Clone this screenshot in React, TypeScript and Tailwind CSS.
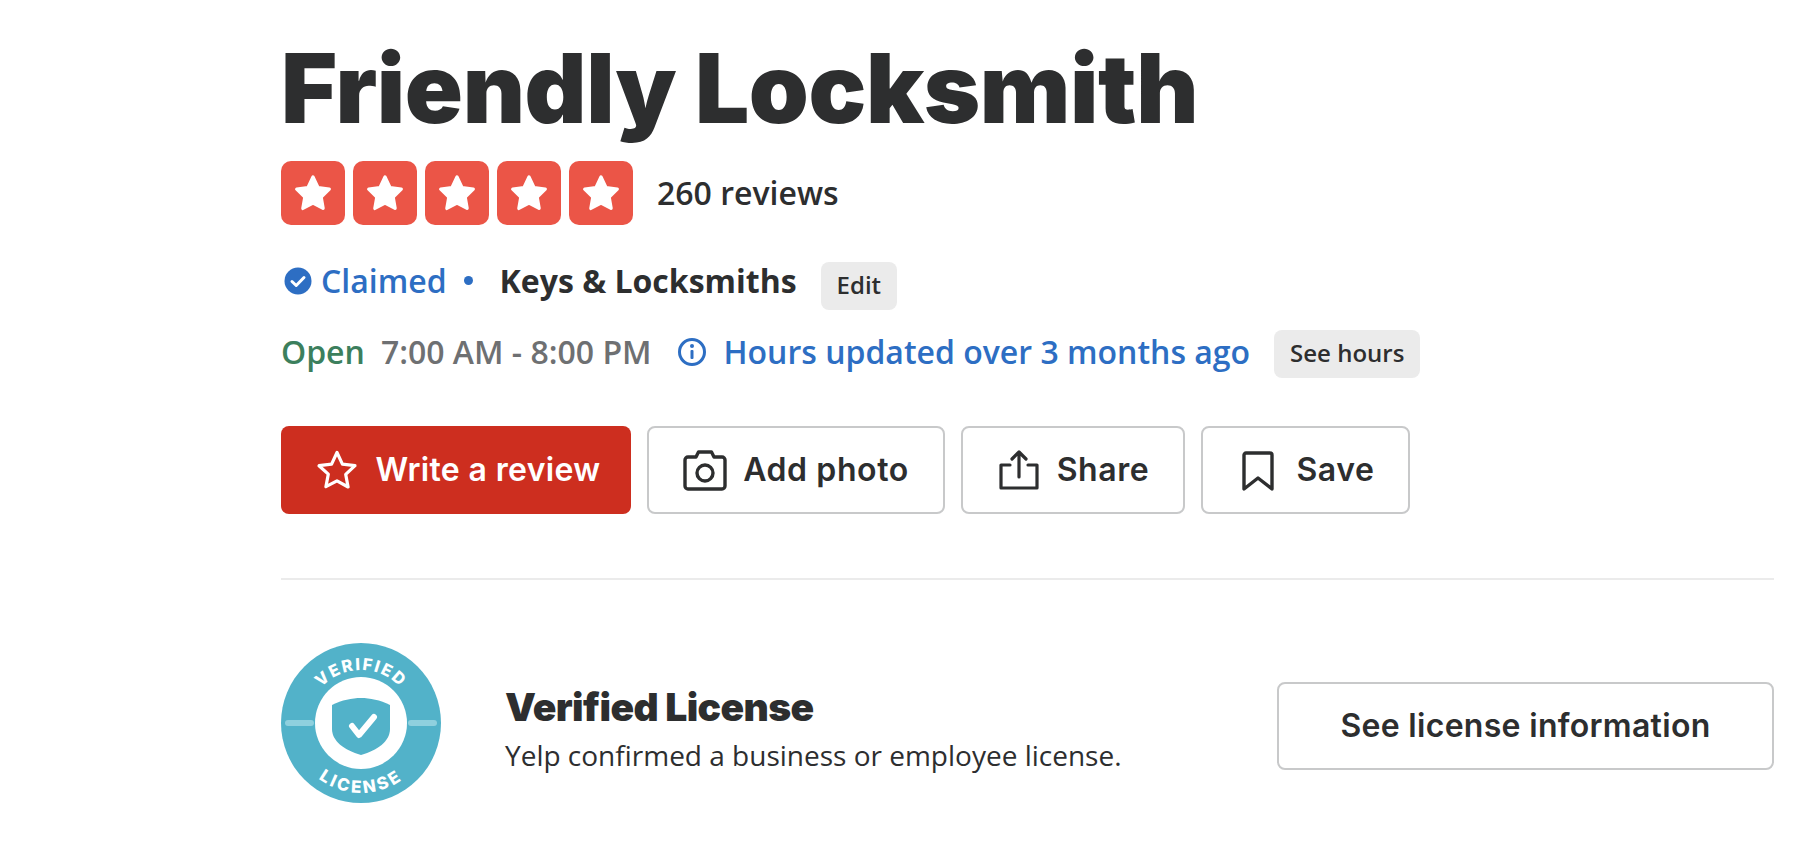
const ink = 'text-[#2d2e2f]';

function StarBox() {
  return (
    <div className="w-16 h-16 rounded-[10px] bg-[#eb5547] flex items-center justify-center">
      <svg className="w-11 h-11" viewBox="0 0 40 40" aria-hidden="true">
        <path
          d="M20 5.5l4.6 9.6 10.2 1.4-7.4 7.2 1.8 10.3L20 29.1 10.8 34l1.8-10.3-7.4-7.2 10.2-1.4z"
          fill="#fff"
          stroke="#fff"
          strokeWidth={3}
          strokeLinejoin="round"
        />
      </svg>
    </div>
  );
}

function SmallButton({ label }: { label: string }) {
  return (
    <div className={`h-12 px-4 rounded-lg bg-[#ebebeb] flex items-center text-[24px] font-semibold ${ink} font-['Open_Sans',sans-serif]`}>
      <span className="pb-[2px]">{label}</span>
    </div>
  );
}

function ActionButton({ label, width, icon }: { label: string; width: string; icon: React.ReactNode }) {
  return (
    <div className={`${width} h-[88px] rounded-lg border-2 border-[#c8c9ca] flex items-center justify-center gap-4 text-[32px] font-semibold tracking-[0.6px] ${ink}`}>
      {icon}
      {label}
    </div>
  );
}

function LicenseBadge() {
  return (
    <svg className="w-40 h-40 shrink-0" viewBox="0 0 160 160" aria-hidden="true">
      <circle cx="80" cy="80" r="80" fill="#52b2c9" />
      <circle cx="80" cy="80" r="46" fill="#fff" />
      <rect x="4" y="77" width="29" height="6" rx="3" fill="#8fd0de" />
      <rect x="127" y="77" width="29" height="6" rx="3" fill="#8fd0de" />
      <path d="M80 55c9 0 19 2 29 7v24c0 12-12 21-29 26-17-5-29-14-29-26V62c10-5 20-7 29-7z" fill="#52b2c9" />
      <path d="M71 83l7 9 15-18" fill="none" stroke="#fff" strokeWidth={6} strokeLinecap="round" strokeLinejoin="round" />
      <defs>
        <path id="badge-top" d="M27 80a53 53 0 0 1 106 0" />
        <path id="badge-bottom" d="M10 80a70 70 0 0 0 140 0" />
      </defs>
      <text fill="#fff" fontFamily="Inter, sans-serif" fontWeight={800} fontSize="16.5" letterSpacing="1.8" textAnchor="middle">
        <textPath href="#badge-top" startOffset="50%">VERIFIED</textPath>
      </text>
      <text fill="#fff" fontFamily="Inter, sans-serif" fontWeight={800} fontSize="17" letterSpacing="2.8" textAnchor="middle">
        <textPath href="#badge-bottom" startOffset="50%">LICENSE</textPath>
      </text>
    </svg>
  );
}

export default function App() {
  return (
    <div className="w-[1815px] h-[865px] overflow-hidden bg-white pl-[281px] pr-[41px] font-['Inter',sans-serif]">
      <h1 className={`h-[161px] pt-[33px] text-[96px] leading-[110px] font-black tracking-[-0.4px] ${ink}`}>
        Friendly Locksmith
      </h1>

      {/* Rating */}
      <div className="flex items-center">
        <div className="flex gap-2">
          <StarBox />
          <StarBox />
          <StarBox />
          <StarBox />
          <StarBox />
        </div>
        <span className={`ml-6 text-[32px] font-semibold ${ink} font-['Open_Sans',sans-serif]`}>260 reviews</span>
      </div>

      {/* Claimed */}
      <div className="mt-[37px] h-12 flex items-center font-['Open_Sans',sans-serif] text-[32px] font-semibold">
        <div className="flex items-center pb-[11px]">
          <svg className="w-8 h-8 ml-px" viewBox="0 0 32 32" aria-hidden="true">
            <circle cx="16" cy="16" r="13.5" fill="#2d6ec3" />
            <path d="M10 16.5l4.2 4L22 12.5" fill="none" stroke="#fff" strokeWidth={3} strokeLinecap="round" strokeLinejoin="round" />
          </svg>
          <span className="ml-[7px] text-[#2d6ec3]">Claimed</span>
          <span className="ml-[17px] w-[9px] h-[9px] rounded-full bg-[#2d6ec3]" />
          <span className={`ml-[27px] font-bold ${ink}`}>Keys &amp; Locksmiths</span>
        </div>
        <div className="ml-6">
          <SmallButton label="Edit" />
        </div>
      </div>

      {/* Hours */}
      <div className="mt-5 h-12 flex items-center font-['Open_Sans',sans-serif] text-[32px] font-semibold">
        <div className="flex items-center pb-[4px]">
          <span className="text-[#3c7f5d]">Open</span>
          <span className="ml-4 text-[#6e7072]">7:00 AM - 8:00 PM</span>
          <svg className="w-8 h-8 ml-[24px]" viewBox="0 0 32 32" fill="none" aria-hidden="true">
            <circle cx="16" cy="16" r="12.5" stroke="#2d6ec3" strokeWidth={3} />
            <rect x="14.5" y="14" width="3" height="9" rx="1" fill="#2d6ec3" />
            <circle cx="16" cy="10" r="2" fill="#2d6ec3" />
          </svg>
          <span className="ml-4 text-[#2d6ec3]">Hours updated over 3 months ago</span>
        </div>
        <div className="ml-6">
          <SmallButton label="See hours" />
        </div>
      </div>

      {/* Actions */}
      <div className="mt-12 flex gap-4">
        <div className="w-[350px] h-[88px] rounded-lg bg-[#cd2e1f] flex items-center justify-center gap-4 text-[32px] font-semibold tracking-[0.35px] text-white">
          <svg className="w-11 h-11 ml-1" viewBox="0 0 44 44" fill="none" aria-hidden="true">
            <path
              d="M22 4.5l5.4 11.6 12.6 1.6-9.3 8.7 2.4 12.6L22 32.8l-11.1 5.9 2.4-12.6L4 17.7l12.6-1.6z"
              stroke="#fff"
              strokeWidth={3.2}
              strokeLinejoin="round"
            />
          </svg>
          Write a review
        </div>
        <ActionButton
          label="Add photo"
          width="w-[298px]"
          icon={
            <svg className="w-11 h-11" viewBox="0 0 44 44" fill="none" stroke="#2d2e2f" strokeWidth={3.4} strokeLinejoin="round" aria-hidden="true">
              <path d="M13 9l2.5-5h13L31 9h8a3 3 0 0 1 3 3v26a3 3 0 0 1-3 3H5a3 3 0 0 1-3-3V12a3 3 0 0 1 3-3z" />
              <circle cx="22" cy="25" r="8" />
            </svg>
          }
        />
        <ActionButton
          label="Share"
          width="w-[224px]"
          icon={
            <svg className="w-11 h-11" viewBox="0 0 44 44" fill="none" stroke="#2d2e2f" strokeWidth={3.2} strokeLinecap="round" strokeLinejoin="round" aria-hidden="true">
              <path d="M22 29V4M15 11l7-7 7 7" />
              <path d="M13 17H4v23h36V17h-9" />
            </svg>
          }
        />
        <ActionButton
          label="Save"
          width="w-[209px]"
          icon={
            <svg className="w-11 h-11" viewBox="0 0 44 44" fill="none" stroke="#2d2e2f" strokeWidth={3.4} strokeLinejoin="round" aria-hidden="true">
              <path d="M10 5h24a2 2 0 0 1 2 2v34L22 30 8 41V7a2 2 0 0 1 2-2z" />
            </svg>
          }
        />
      </div>

      <div className="mt-16 border-t-2 border-[#ebebeb]" />

      {/* License */}
      <div className="mt-[63px] flex items-center">
        <LicenseBadge />
        <div className="ml-16 flex-1 pt-[11px]">
          <h2 className={`text-[39px] leading-[48px] font-black tracking-[-0.6px] ${ink}`}>Verified License</h2>
          <p className={`mt-1 text-[28px] leading-[40px] ${ink} font-['Open_Sans',sans-serif]`}>
            Yelp confirmed a business or employee license.
          </p>
        </div>
        <div className={`w-[497px] h-[88px] mt-[6px] rounded-lg border-2 border-[#c8c9ca] flex items-center justify-center text-[32px] font-semibold tracking-[0.3px] ${ink}`}>
          See license information
        </div>
      </div>
    </div>
  );
}
